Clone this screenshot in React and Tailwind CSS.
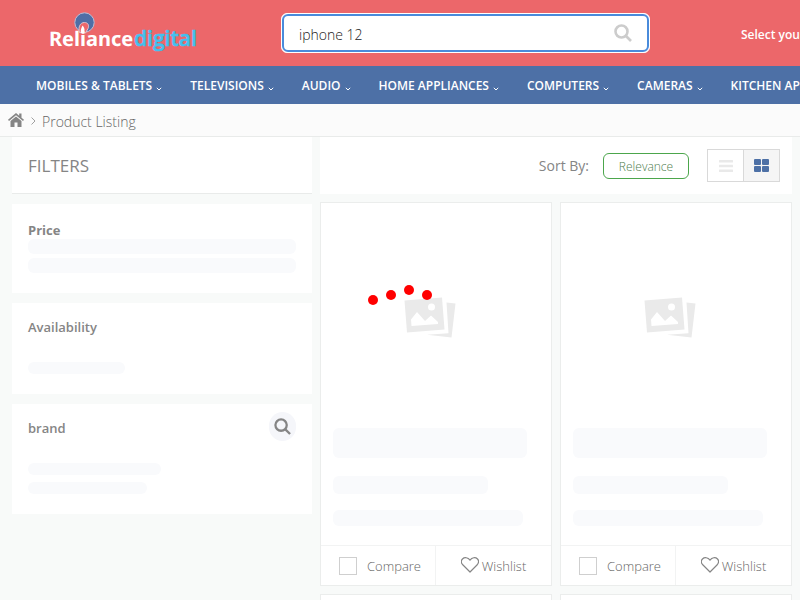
import React from "react";

const NAV_ITEMS = ["MOBILES & TABLETS", "TELEVISIONS", "AUDIO", "HOME APPLIANCES", "COMPUTERS", "CAMERAS", "KITCHEN APPLIANCES"];

function Logo() {
  return (
    <svg viewBox="0 0 150 42" className="block h-[42px] w-[150px]" role="img" aria-label="Reliance digital">
      <circle cx="36.500" cy="10.500" r="9.700" fill="#4f6ea6" stroke="#b9bfd8" strokeWidth="1" />
      <path d="M31.500 20.500C30 15 32 10.500 36.500 10.500C40 10.500 41.500 13.500 40 16.500L37.500 21Z" fill="#ed676b" stroke="#dfc4d0" strokeWidth="1" />
      <path d="M34.500 13.500C37 16.500 36.800 18 36 21H33C32.200 18 33.500 16 34.500 13.500Z" fill="#fff" />
      <text x="1" y="34" fontFamily="'Noto Sans', sans-serif" fontWeight="700" fontSize="20" fill="#fff" textRendering="geometricPrecision">Reliance</text>
      <text x="86" y="34" fontFamily="'Open Sans', sans-serif" fontWeight="600" fontSize="21" fill="#44c0ee" stroke="#44c0ee" strokeWidth="0.600">digital</text>
    </svg>
  );
}

function SearchIcon({ className, strokeWidth }) {
  return (
    <svg viewBox="0 0 18 18" className={className} fill="none" stroke="currentColor" strokeWidth={strokeWidth} aria-hidden="true">
      <circle cx="7.500" cy="7.500" r="6" />
      <path d="M12 12L17 17" />
    </svg>
  );
}

function NavChevron() {
  return (
    <svg viewBox="0 0 6 4" className="mt-[5px] h-1 w-1.5" fill="none" stroke="currentColor" aria-hidden="true">
      <path d="M0.800 0.800L3 3L5.200 0.800" />
    </svg>
  );
}

function HomeIcon() {
  return (
    <svg viewBox="0 0 16 14" className="h-3.5 w-4" fill="currentColor" aria-hidden="true">
      <path d="M8 0L0 6.800L1 8L8 2.200L15 8L16 6.800L13.500 4.700V0.500H11.200V2.700Z" />
      <path d="M8 3.500L2.500 8V14H6.500V9.500H9.500V14H13.500V8Z" />
    </svg>
  );
}

function Placeholder() {
  return (
    <svg viewBox="0 0 52 42" className="h-[42px] w-[52px]" aria-hidden="true">
      <path d="M0.500 3.500L38 0.500L40.500 32.500L3 35.500Z" fill="#eaeaea" />
      <path d="M42.500 5.500L51.500 6.500L47.500 40.500L23 37.800L44.500 36.200Z" fill="#eaeaea" />
      <circle cx="27.500" cy="10" r="3.500" fill="#fff" />
      <path d="M7 22.500L13 15L21 24L27 18.500L34 25V27L7.500 29Z" fill="#fff" />
    </svg>
  );
}

function Heart() {
  return (
    <svg viewBox="0 0 18 16" className="mb-0.5 h-4 w-[18px]" fill="none" stroke="currentColor" strokeWidth="1.200" strokeLinejoin="round" aria-hidden="true">
      <path d="M9 15L2 8C0 6 0 3.500 1.500 2C3.500 0 7 0.200 9 3.200C11 0.200 14.500 0 16.500 2C18 3.500 18 6 16 8Z" />
    </svg>
  );
}

function ProductCard({ id }) {
  return (
    <article className="border border-[#ebedec] bg-white">
      <div className="flex h-[225px] items-center justify-center pt-1 pr-3">
        <Placeholder />
      </div>
      <div className="flex h-[117px] flex-col px-3">
        <div className="h-[30px] w-[94%] rounded-md bg-[#f9fafc]" />
        <div className="mt-[18px] h-[18px] w-3/4 rounded-md bg-[#f9fafc]" />
        <div className="mt-4 h-4 w-[92%] rounded-md bg-[#f9fafc]" />
      </div>
      <div className="flex h-10 border-t border-[#f2f3f3] text-[13px]">
        <div className="flex w-1/2 items-center border-r border-[#f2f3f3] pl-[18px]">
          <input id={id} type="checkbox" className="h-[18px] w-[18px] shrink-0 appearance-none border border-[#cfcfcf] bg-white" />
          <label htmlFor={id} className="pt-0.5 pl-2.5 font-light text-[#666]">Compare</label>
        </div>
        <button type="button" className="flex w-1/2 items-center justify-center gap-[3px]">
          <Heart />
          <span className="pt-0.5 font-light text-[#666]">Wishlist</span>
        </button>
      </div>
    </article>
  );
}

function Bar({ className }) {
  return <div className={`rounded-md bg-[#f9fafc] ${className}`} />;
}

export default function App() {
  return (
    <div className="relative h-screen overflow-hidden bg-[#f8faf9] font-['Open_Sans',sans-serif] text-[#858585]">
      <header className="flex h-[66px] items-center overflow-hidden bg-[#ec676a] pl-12">
        <a href="#home" className="w-[150px] shrink-0">
          <Logo />
        </a>
        <form className="ml-[83px] flex h-10 w-[369px] shrink-0 items-center rounded-md border border-white bg-white">
          <div className="flex h-full w-full items-center rounded-md border-2 border-[#4a8bdb] px-[15px]">
            <input type="text" aria-label="Search" defaultValue="iphone 12" className="min-w-0 flex-1 bg-transparent pt-1 text-sm font-light text-[#222] outline-none" />
            <button type="button" aria-label="Search" className="text-[#ccc]">
              <SearchIcon className="h-[18px] w-[18px]" strokeWidth="2.600" />
            </button>
          </div>
        </form>
        <a href="#location" className="ml-[91px] shrink-0 pt-1 text-xs font-semibold whitespace-nowrap text-white">Select your Pincode</a>
      </header>
      <nav className="flex h-[38px] items-center gap-7 overflow-hidden bg-[#4d70a6] pt-0.5 pl-9 text-xs font-semibold text-white">
        {NAV_ITEMS.map((item) => (
          <a key={item} href="#category" className="flex shrink-0 items-center gap-1 whitespace-nowrap">
            {item}
            <NavChevron />
          </a>
        ))}
      </nav>
      <div className="flex h-[33px] items-center border-b border-[#e9ebea] bg-[#fbfbfb] pl-2 text-sm">
        <a href="#home" aria-label="Home">
          <HomeIcon />
        </a>
        <svg viewBox="0 0 5 8" className="mt-0.5 ml-[7px] h-2 w-[5px]" fill="none" stroke="#a0a0a0" aria-hidden="true">
          <path d="M0.500 0.500L4 4L0.500 7.500" />
        </svg>
        <span className="pt-1 pl-1.5 font-light text-[#666]">Product Listing</span>
      </div>
      <main className="flex gap-2 pr-2 pl-3">
        <aside className="flex w-[300px] shrink-0 flex-col gap-2.5">
          <h2 className="flex h-[57px] items-center border-b border-[#e9ebea] bg-white px-4 pt-0.5 text-[17px]">FILTERS</h2>
          <section className="h-[89px] bg-white px-4 pt-[17px]">
            <h3 className="text-[13px] leading-[18px] font-bold">Price</h3>
            <Bar className="h-[15px]" />
            <Bar className="mt-1 h-[15px]" />
          </section>
          <section className="h-[91px] bg-white px-4 pt-[15px]">
            <h3 className="text-[13px] leading-[18px] font-semibold">Availability</h3>
            <Bar className="mt-[26px] h-3 w-[97px]" />
          </section>
          <section className="h-[110px] bg-white px-4 pt-2">
            <div className="flex items-center justify-between">
              <h3 className="pt-0.5 text-[13px] leading-[18px] font-semibold">brand</h3>
              <button type="button" aria-label="Search brand" className="flex h-[29px] w-[27px] items-center justify-center rounded-full bg-[#f5f6fa]">
                <SearchIcon className="h-[17px] w-[17px]" strokeWidth="2.400" />
              </button>
            </div>
            <Bar className="mt-[22px] h-3 w-[133px]" />
            <Bar className="mt-[7px] h-3 w-[119px]" />
          </section>
        </aside>
        <section className="flex min-w-0 flex-1 flex-col gap-2">
          <div className="flex h-[57px] items-center justify-end bg-white pr-3">
            <span className="text-sm">Sort By:</span>
            <button type="button" className="ml-3.5 h-[26px] w-[86px] rounded-md border border-[#4ca64c] pt-0.5 text-xs font-light text-[#4f804f]">Relevance</button>
            <div className="ml-[18px] flex">
              <button type="button" aria-label="List view" className="flex h-[33px] w-9 items-center justify-center border border-r-0 border-[#d9d9d9]">
                <svg viewBox="0 0 14 12" className="h-3 w-3.5" fill="#e9e9e9" aria-hidden="true">
                  <rect width="14" height="2.500" rx="0.500" />
                  <rect y="4.700" width="14" height="2.500" rx="0.500" />
                  <rect y="9.400" width="14" height="2.500" rx="0.500" />
                </svg>
              </button>
              <button type="button" aria-label="Grid view" className="flex h-[33px] w-[37px] items-center justify-center border border-[#d9d9d9] bg-[#f5f5f5]">
                <svg viewBox="0 0 15 13" className="h-[13px] w-[15px]" fill="#4d70a6" aria-hidden="true">
                  <rect width="7" height="6" rx="1" />
                  <rect x="8" width="7" height="6" rx="1" />
                  <rect y="7" width="7" height="6" rx="1" />
                  <rect x="8" y="7" width="7" height="6" rx="1" />
                </svg>
              </button>
            </div>
          </div>
          <div className="grid grid-cols-2 gap-2">
            {["compare-1", "compare-2", "compare-3", "compare-4"].map((id) => (
              <ProductCard key={id} id={id} />
            ))}
          </div>
        </section>
      </main>
      <div role="status" aria-label="Loading" className="absolute top-[285px] left-1/2 flex -translate-x-8 gap-2">
        <span className="mt-2.5 h-2.5 w-2.5 rounded-full bg-[#f00]" />
        <span className="mt-[5px] h-2.5 w-2.5 rounded-full bg-[#f00]" />
        <span className="h-2.5 w-2.5 rounded-full bg-[#f00]" />
        <span className="mt-[5px] h-2.5 w-2.5 rounded-full bg-[#f00]" />
      </div>
    </div>
  );
}
